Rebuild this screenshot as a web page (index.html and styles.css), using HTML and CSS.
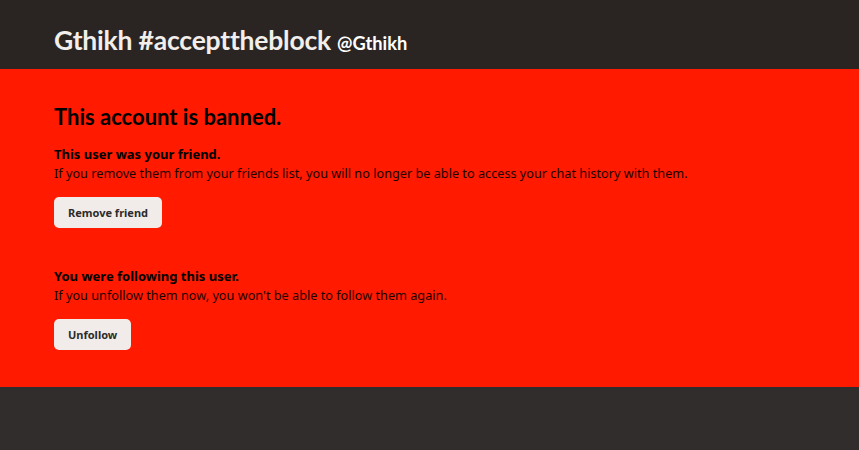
FILE: index.html
```
<!DOCTYPE html>
<html lang="en">
<head>
  <meta charset="UTF-8" />
  <meta name="viewport" content="width=device-width, initial-scale=1.0"/>
  <title>Gthikh</title>
  <link rel="stylesheet" href="styles.css">
</head>
<body>
  <!-- Profile header -->
  <header class="profile-header">
    <h1 class="display-name">Gthikh #accepttheblock</h1>
    <span class="username">@Gthikh</span>
  </header>

  <!-- Ban notice -->
  <section class="banned">
    <h2>This account is banned.</h2>

    <div class="notice">
      <strong>This user was your friend.</strong>
      <p>If you remove them from your friends list, you will no longer be able to access your chat history with them.</p>
      <button class="btn">Remove friend</button>
    </div>

    <div class="notice">
      <strong>You were following this user.</strong>
      <p>If you unfollow them now, you won't be able to follow them again.</p>
      <button class="btn">Unfollow</button>
    </div>
  </section>
</body>
</html>
```

FILE: styles.css
```
body {
  margin: 0;
  background-color: #302d2c;
  font-family: Lato, "Noto Sans", sans-serif;
  color: #000;
}
.profile-header {
  background-color: #2a2523;
  height: 69px;
  padding: 0 54px;
  box-sizing: border-box;
  display: flex;
  align-items: baseline;
  gap: 6px;
  padding-top: 24px;
}
.display-name {
  margin: 0;
  font-size: 26.5px;
  line-height: 32px;
  font-weight: 700;
  color: #f2eeec;
  letter-spacing: -0.2px;
}
.username {
  font-size: 18.3px;
  font-weight: 700;
  color: #fff;
}
.banned {
  background-color: #ff1a00;
  padding: 34px 54px 37px;
}
.banned h2 {
  margin: 0 0 14px;
  font-size: 22px;
  font-weight: 700;
  line-height: 28px;
}
.notice {
  font-family: "Noto Sans", Lato, sans-serif;
  font-size: 13px;
  line-height: 19px;
}
.notice + .notice {
  margin-top: 39px;
}
.notice strong {
  display: block;
  font-weight: 700;
}
.notice p {
  margin: 0 0 14px;
  font-size: 12.7px;
  color: #1a0400;
}
.btn {
  font-family: "Noto Sans", Lato, sans-serif;
  font-size: 11px;
  font-weight: 700;
  color: #2b2b2b;
  background-color: #f1ece9;
  border: none;
  border-radius: 5px;
  height: 31px;
  padding: 0 14px;
}
```
